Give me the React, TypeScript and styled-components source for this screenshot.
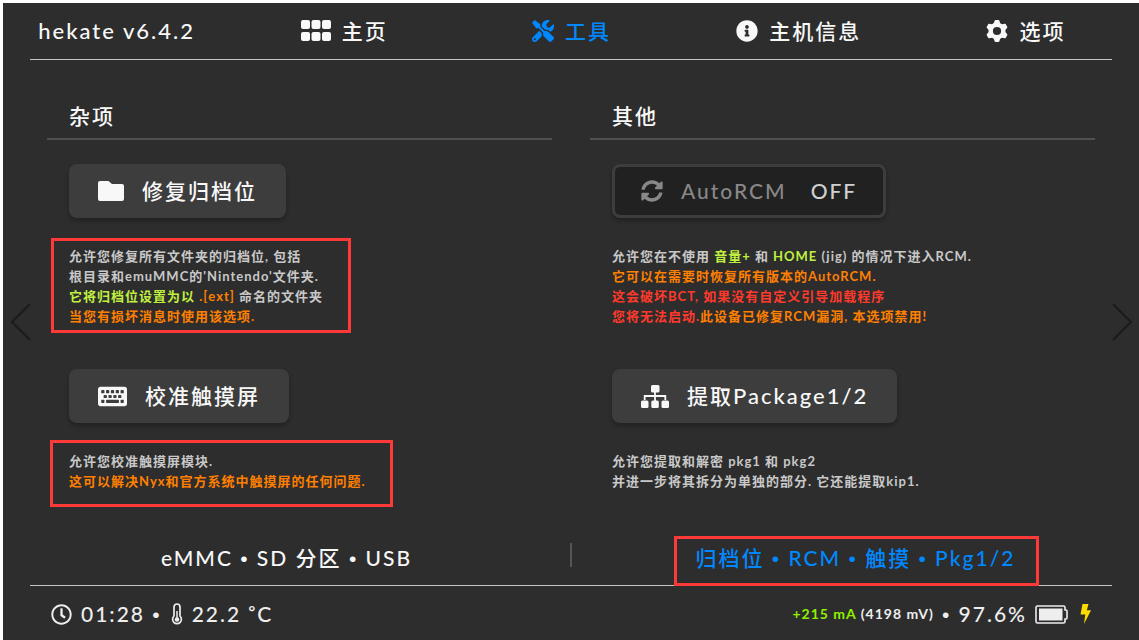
import React from "react";
import styled, { createGlobalStyle } from "styled-components";
import { FaTools, FaInfoCircle, FaKeyboard, FaSyncAlt, FaRegClock } from "react-icons/fa";

const GlobalStyle = createGlobalStyle`
  *, *::before, *::after { box-sizing: border-box; }
  body {
    margin: 0;
    background: #ffffff;
    font-family: Lato, "Noto Sans CJK SC", sans-serif;
    font-weight: 500;
  }
  button {
    font: inherit;
    letter-spacing: inherit;
    color: inherit;
    background: none;
    border: 0;
    padding: 0;
    cursor: pointer;
  }
  svg { display: block; flex: none; }
`;

const Screen = styled.div`
  position: relative;
  display: flex;
  flex-direction: column;
  min-height: calc(100vh - 3px);
  margin: 3px 0 0 3px;
  background: #2d2d2d;
  color: #f8f8f8;
  font-size: 21px;
  line-height: 28px;
  letter-spacing: 2px;
`;

const TopBar = styled.header`
  display: grid;
  grid-template-columns: repeat(5, 1fr);
  align-items: center;
  height: 56px;
`;

const Brand = styled.h1`
  margin: 0;
  font: inherit;
  font-size: 22px;
  text-align: center;
`;

const NavTab = styled.button<{ $active?: boolean }>`
  display: flex;
  align-items: center;
  justify-content: center;
  gap: 11px;
  padding-left: 1px;
  color: ${(p) => (p.$active ? "#0088ff" : "inherit")};
`;

const Rule = styled.hr`
  width: calc(100% - 54px);
  height: 1px;
  margin: 0 27px;
  border: 0;
  background: #c4c4c4;
`;

const Content = styled.main`
  flex: 1;
  display: grid;
  grid-template-columns: 1fr 1fr;
  column-gap: 38px;
  padding: 42px 44px 0;
`;

const Column = styled.section`
  display: flex;
  flex-direction: column;
`;

const ColumnTitle = styled.h2`
  margin: 0 0 24px;
  padding: 0 22px 8px;
  border-bottom: 2px solid #505050;
  font: inherit;
`;

const Tool = styled.div`
  display: flex;
  flex-direction: column;
  align-items: flex-start;
  gap: 28px;
  padding: 0 22px;

  & + & {
    margin-top: 43px;
  }
`;

const ToolButton = styled.button<{ $inset?: boolean }>`
  display: flex;
  align-items: center;
  gap: 18px;
  height: 54px;
  padding: 0 26px;
  border: 3px solid #3d3d3d;
  border-radius: 8px;
  background: ${(p) => (p.$inset ? "#212121" : "#3d3d3d")};
  color: ${(p) => (p.$inset ? "#888888" : "#f8f8f8")};
  box-shadow: 0 3px 4px rgba(0, 0, 0, 0.25);
`;

const Latin = styled.span`
  font-size: 22px;
`;

const ToggleState = styled.span`
  margin-left: 6px;
  color: #d0d0d0;
`;

const Description = styled.p`
  position: relative;
  margin: 0;
  color: #c8c8c8;
  font-size: 13px;
  font-weight: 700;
  line-height: 20px;
  letter-spacing: 1px;
  white-space: nowrap;
`;

const tones = { lime: "#c0f040", orange: "#ff8000", red: "#ff3a2c" };

const Tone = styled.span<{ $tone: keyof typeof tones }>`
  color: ${(p) => tones[p.$tone]};
`;

const Marker = styled.span<{ $inset: string }>`
  position: absolute;
  inset: ${(p) => p.$inset};
  border: 3px solid #ff3838;
  pointer-events: none;
`;

const PageTabs = styled.nav`
  display: grid;
  grid-template-columns: 1fr 2px 1fr;
  align-items: center;
  height: 54px;
`;

const PageTab = styled.button<{ $active?: boolean }>`
  position: relative;
  justify-self: center;
  color: ${(p) => (p.$active ? "#0088ff" : "inherit")};
`;

const Bullet = styled.span`
  font-family: "Liberation Sans", sans-serif;
  line-height: 1;

  &::before {
    content: "•";
  }
`;

const Divider = styled.span`
  height: 24px;
  margin-bottom: 6px;
  background: #555555;
`;

const StatusBar = styled.footer`
  display: flex;
  align-items: center;
  justify-content: space-between;
  height: 54px;
  padding: 2px 48px 0;
  color: #eeeeee;
`;

const StatusGroup = styled.div<{ $gap: number }>`
  display: flex;
  align-items: center;
  gap: ${(p) => p.$gap}px;
`;

const Degree = styled.span`
  font-size: 16px;
  font-weight: 700;
  line-height: 1;
  vertical-align: 5px;
`;

const Power = styled.span`
  font-size: 14px;
  font-weight: 700;
  letter-spacing: 1px;
`;

const Current = styled.span`
  color: #90f000;
`;

const PageArrow = styled.button<{ $side: "left" | "right" }>`
  position: absolute;
  top: 300px;
  ${(p) => p.$side}: 6px;
  color: #1b1b1b;
`;

const GridIcon = () => (
  <svg width="30" height="22" viewBox="0 0 30 22" fill="currentColor">
    {[0, 12].map((y) =>
      [0, 10.5, 21].map((x) => <rect key={`${x}-${y}`} x={x} y={y} width="9" height="9" rx="2" />)
    )}
  </svg>
);

const GearIcon = () => (
  <svg width="22" height="22" viewBox="0 0 22 22" fill="currentColor">
    <circle cx="11" cy="11" r="6.300" fill="none" stroke="currentColor" strokeWidth="4.400" />
    {[0, 60, 120, 180, 240, 300].map((a) => (
      <path
        key={a}
        transform={`rotate(${a} 11 11)`}
        d="M7.500 4.200L8.600.8Q8.800 0 9.600 0h2.800q.8 0 1 .8l1.100 3.400z"
      />
    ))}
  </svg>
);

const FolderIcon = () => (
  <svg width="26" height="20" viewBox="0 0 26 20" fill="currentColor">
    <path d="M2 0h8.500l3.500 3h10a2 2 0 0 1 2 2v13a2 2 0 0 1-2 2H2a2 2 0 0 1-2-2V2a2 2 0 0 1 2-2z" />
  </svg>
);

const SitemapIcon = () => (
  <svg width="28" height="23" viewBox="0 0 28 23" fill="currentColor">
    <rect x="10" y="0" width="8.500" height="7.500" rx="1.500" />
    <rect x="0" y="15.500" width="7.500" height="7.500" rx="1.500" />
    <rect x="10.300" y="15.500" width="7.500" height="7.500" rx="1.500" />
    <rect x="20.500" y="15.500" width="7.500" height="7.500" rx="1.500" />
    <path d="M3.700 15v-4h20.600v4M14 7v9" fill="none" stroke="currentColor" strokeWidth="1.800" />
  </svg>
);

const ThermometerIcon = () => (
  <svg width="12" height="22" viewBox="0 0 12 22" fill="none" stroke="currentColor">
    <path d="M3 4a3 3 0 0 1 6 0v9a4.400 4.400 0 1 1-6 0z" strokeWidth="1.700" />
    <path d="M6 8v9" strokeWidth="1.500" />
    <circle cx="6" cy="16.500" r="2.300" fill="currentColor" stroke="none" />
  </svg>
);

const BatteryIcon = () => (
  <svg width="33" height="19" viewBox="0 0 33 19" fill="none" stroke="currentColor">
    <path d="M2.500 1h26a1.500 1.500 0 0 1 1.500 1.500V5h1a1 1 0 0 1 1 1v7a1 1 0 0 1-1 1h-1v2.500a1.500 1.500 0 0 1-1.500 1.500h-26A1.500 1.500 0 0 1 1 16.500v-14A1.500 1.500 0 0 1 2.500 1z" strokeWidth="1.600" />
    <rect x="4" y="3.500" width="23.500" height="12" fill="currentColor" stroke="none" />
  </svg>
);

const BoltIcon = () => (
  <svg width="15" height="20" viewBox="-4 0 15 20" fill="#ffdc00">
    <path d="M2.500 0h6L6.800 6.200H11L4 20l1.300-9.500H.5z" />
  </svg>
);

const Chevron = ({ d }: { d: string }) => (
  <svg width="22" height="38" viewBox="0 0 22 38" fill="none" stroke="currentColor" strokeWidth="2">
    <path d={d} />
  </svg>
);

export default function App() {
  return (
    <>
      <GlobalStyle />
      <Screen>
        <TopBar>
          <Brand>hekate v6.4.2</Brand>
          <NavTab><GridIcon />主页</NavTab>
          <NavTab $active><FaTools size={22} />工具</NavTab>
          <NavTab><FaInfoCircle size={22} />主机信息</NavTab>
          <NavTab><GearIcon />选项</NavTab>
        </TopBar>
        <Rule />

        <Content>
          <Column>
            <ColumnTitle>杂项</ColumnTitle>
            <Tool>
              <ToolButton><FolderIcon />修复归档位</ToolButton>
              <Description>
                允许您修复所有文件夹的归档位, 包括<br />
                根目录和emuMMC的'Nintendo'文件夹.<br />
                <Tone $tone="lime">它将归档位设置为以</Tone> <Tone $tone="orange">.[ext]</Tone> 命名的文件夹<br />
                <Tone $tone="orange">当您有损坏消息时使用该选项.</Tone>
                <Marker $inset="-8px -28px -7px -18px" />
              </Description>
            </Tool>
            <Tool>
              <ToolButton><FaKeyboard size={29} />校准触摸屏</ToolButton>
              <Description>
                允许您校准触摸屏模块.<br />
                <Tone $tone="orange">这可以解决Nyx和官方系统中触摸屏的任何问题.</Tone>
                <Marker $inset="-11px -27px -16px -19px" />
              </Description>
            </Tool>
          </Column>

          <Column>
            <ColumnTitle>其他</ColumnTitle>
            <Tool>
              <ToolButton $inset><FaSyncAlt size={22} />AutoRCM<ToggleState>OFF</ToggleState></ToolButton>
              <Description>
                允许您在不使用 <Tone $tone="lime">音量+</Tone> 和 <Tone $tone="lime">HOME</Tone> (jig) 的情况下进入RCM.<br />
                <Tone $tone="orange">它可以在需要时恢复所有版本的AutoRCM.</Tone><br />
                <Tone $tone="red">这会破坏BCT, 如果没有自定义引导加载程序</Tone><br />
                <Tone $tone="red">您将无法启动.</Tone><Tone $tone="orange">此设备已修复RCM漏洞, 本选项禁用!</Tone>
              </Description>
            </Tool>
            <Tool>
              <ToolButton><SitemapIcon /><span>提取<Latin>Package1/2</Latin></span></ToolButton>
              <Description>
                允许您提取和解密 pkg1 和 pkg2<br />
                并进一步将其拆分为单独的部分. 它还能提取kip1.
              </Description>
            </Tool>
          </Column>
        </Content>

        <PageTabs>
          <PageTab>eMMC <Bullet /> SD 分区 <Bullet /> USB</PageTab>
          <Divider />
          <PageTab $active>
            归档位 <Bullet /> RCM <Bullet /> 触摸 <Bullet /> Pkg1/2
            <Marker $inset="-8px -24px -14px -22px" />
          </PageTab>
        </PageTabs>
        <Rule />

        <StatusBar>
          <StatusGroup $gap={9}>
            <FaRegClock size={21} />
            <span>01:28 <Bullet /></span>
            <ThermometerIcon />
            <span>22.2 <Degree>°</Degree>C</span>
          </StatusGroup>
          <StatusGroup $gap={8}>
            <Power><Current>+215 mA</Current> (4198 mV)</Power>
            <span><Bullet /> 97.6%</span>
            <BatteryIcon />
            <BoltIcon />
          </StatusGroup>
        </StatusBar>

        <PageArrow $side="left" aria-label="上一页"><Chevron d="M21 1L3 19l18 18" /></PageArrow>
        <PageArrow $side="right" aria-label="下一页"><Chevron d="M2 1l18 18L2 37" /></PageArrow>
      </Screen>
    </>
  );
}
